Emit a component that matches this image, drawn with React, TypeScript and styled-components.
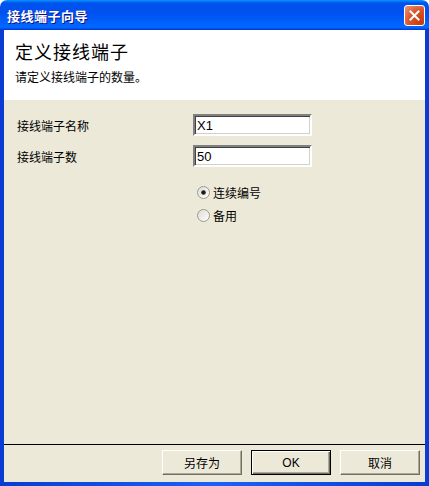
import React from "react";
import styled, { createGlobalStyle } from "styled-components";

const GlobalStyle = createGlobalStyle`
  html, body {
    margin: 0;
    padding: 0;
    background: #fff;
  }
  body {
    font-family: "Liberation Sans", "Noto Sans CJK SC", sans-serif;
    font-size: 12px;
  }
`;

const Window = styled.div`
  width: 429px;
  height: 486px;
  display: flex;
  flex-direction: column;
  overflow: hidden;
`;

const TitleBar = styled.div`
  height: 30px;
  flex: none;
  display: flex;
  align-items: center;
  justify-content: space-between;
  padding: 0 4px 0 7px;
  border-radius: 7px 7px 0 0;
  background: linear-gradient(
    180deg,
    #0997ff 0%,
    #0053ee 10%,
    #0050ee 40%,
    #0066ff 86%,
    #0066ff 92%,
    #005bff 94%,
    #003dd7 97%,
    #003dd7 100%
  );
`;

const Title = styled.div`
  color: #fff;
  font-family: "Noto Sans CJK SC", sans-serif;
  font-weight: 700;
  font-size: 13px;
  letter-spacing: 0.5px;
  text-shadow: 1px 1px #0f1089;
`;

const CloseButton = styled.button`
  width: 21px;
  height: 21px;
  padding: 0;
  border: 1px solid #fff;
  border-radius: 3px;
  display: flex;
  align-items: center;
  justify-content: center;
  background: radial-gradient(
    circle at 90% 90%,
    #c53b0c 0%,
    #d9552a 55%,
    #ee9a7c 100%
  );
  cursor: pointer;
`;

const Frame = styled.div`
  flex: 1;
  display: flex;
  padding: 0 4px 4px 4px;
  background: linear-gradient(90deg, #0a3bd2 0%, #1a62f5 50%, #0a3bd2 100%);
`;

const Client = styled.div`
  flex: 1;
  display: flex;
  flex-direction: column;
  background: #ece9d8;
`;

const Header = styled.div`
  height: 70px;
  flex: none;
  box-sizing: border-box;
  background: #fff;
  padding: 10px 12px 0 11px;
  font-family: "Noto Sans CJK SC", sans-serif;
  color: #000;
`;

const HeaderTitle = styled.div`
  font-size: 18px;
  line-height: 22px;
  letter-spacing: 1px;
  font-weight: 400;
`;

const HeaderSub = styled.div`
  margin-top: 7px;
  font-size: 12px;
  line-height: 16px;
`;

const Body = styled.div`
  flex: 1;
  padding: 14px 0 0 13px;
  display: flex;
  flex-direction: column;
`;

const FieldRow = styled.div`
  display: grid;
  grid-template-columns: 176px 119px;
  align-items: center;
  height: 22px;
  & + & {
    margin-top: 9px;
  }
`;

const Label = styled.span`
  font-family: "Noto Sans CJK SC", sans-serif;
  font-size: 12px;
  color: #000;
`;

const TextBox = styled.input`
  box-sizing: border-box;
  width: 119px;
  height: 22px;
  margin: 0;
  padding: 1px 2px 0;
  font-family: "Liberation Sans", sans-serif;
  font-size: 13px;
  color: #000;
  background: #fff;
  border: 2px solid;
  border-color: #808080 #fff #fff #808080;
  box-shadow: inset 1px 1px #404040, inset -1px -1px #d4d0c8;
  outline: none;
`;

const RadioGroup = styled.div`
  margin: 16px 0 0 180px;
  display: flex;
  flex-direction: column;
  gap: 5px;
`;

const RadioRow = styled.label`
  display: flex;
  align-items: center;
  gap: 3px;
  height: 18px;
  font-family: "Noto Sans CJK SC", sans-serif;
  font-size: 12px;
  color: #000;
`;

const Footer = styled.div`
  flex: none;
  height: 38px;
  box-sizing: border-box;
  border-top: 1px solid #000;
  display: flex;
  justify-content: flex-end;
  gap: 9px;
  padding: 5px 5px 0 0;
`;

const DialogButton = styled.button<{ $default?: boolean }>`
  box-sizing: border-box;
  width: 80px;
  height: 25px;
  margin: 0;
  padding: 0;
  font-family: "Liberation Sans", "Noto Sans CJK SC", sans-serif;
  font-size: 12px;
  color: #000;
  background: #ece9d8;
  border: 1px solid;
  border-color: ${(p) => (p.$default ? "#000" : "#fff #716f64 #716f64 #fff")};
  box-shadow: ${(p) =>
    p.$default
      ? "inset 1px 1px #fff, inset -1px -1px #716f64, inset -2px -2px #aca899"
      : "inset -1px -1px #aca899"};
`;

const CloseGlyph = () => (
  <svg width="11" height="11" viewBox="0 0 11 11">
    <path d="M1.5 1.5 L9.5 9.5 M9.5 1.5 L1.5 9.5" stroke="#fff" strokeWidth="2" strokeLinecap="square" />
  </svg>
);

const RadioGlyph = ({ checked }: { checked?: boolean }) => (
  <svg width="13" height="13" viewBox="0 0 13 13">
    <defs>
      <linearGradient id="rg" x1="0" y1="0" x2="1" y2="1">
        <stop offset="0" stopColor="#dcdad3" />
        <stop offset="1" stopColor="#ffffff" />
      </linearGradient>
    </defs>
    <circle cx="6.5" cy="6.5" r="6" fill="url(#rg)" stroke="#9c9a90" strokeWidth="1" />
    {checked && <circle cx="6.5" cy="6.5" r="2.3" fill="#1d1d1d" />}
  </svg>
);

export default function App() {
  return (
    <>
      <GlobalStyle />
      <Window>
        <TitleBar>
          <Title>接线端子向导</Title>
          <CloseButton type="button" aria-label="关闭">
            <CloseGlyph />
          </CloseButton>
        </TitleBar>
        <Frame>
          <Client>
            <Header>
              <HeaderTitle>定义接线端子</HeaderTitle>
              <HeaderSub>请定义接线端子的数量。</HeaderSub>
            </Header>
            <Body>
              <FieldRow>
                <Label>接线端子名称</Label>
                <TextBox defaultValue="X1" />
              </FieldRow>
              <FieldRow>
                <Label>接线端子数</Label>
                <TextBox defaultValue="50" />
              </FieldRow>
              <RadioGroup>
                <RadioRow>
                  <RadioGlyph checked />
                  连续编号
                </RadioRow>
                <RadioRow>
                  <RadioGlyph />
                  备用
                </RadioRow>
              </RadioGroup>
            </Body>
            <Footer>
              <DialogButton type="button">另存为</DialogButton>
              <DialogButton type="button" $default>
                OK
              </DialogButton>
              <DialogButton type="button">取消</DialogButton>
            </Footer>
          </Client>
        </Frame>
      </Window>
    </>
  );
}
